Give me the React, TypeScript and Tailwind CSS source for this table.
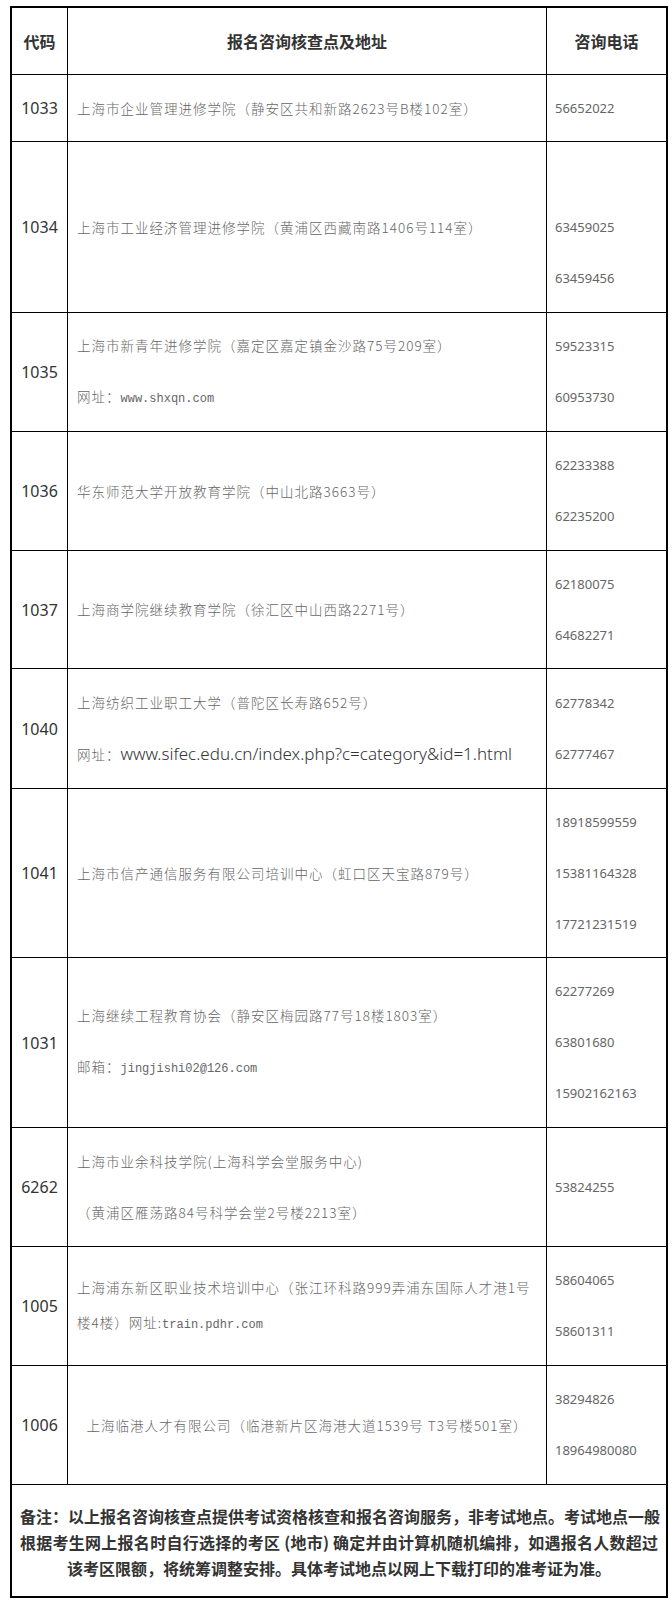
import React from "react";

const cjk = "font-['Noto_Sans_CJK_SC','Noto_Sans_CJK_JP',sans-serif]";
const mono = "font-['Liberation_Mono',monospace] text-[12px] tracking-normal";
const latin = "font-['Noto_Sans',sans-serif] text-[17px] tracking-normal text-[#333]";

type Row = {
  code: string;
  h: string;
  lh?: string;
  center?: boolean;
  lines: React.ReactNode[];
  phones: string[];
};

const rows: Row[] = [
  {
    code: "1033",
    h: "h-[67px]",
    lines: ["上海市企业管理进修学院（静安区共和新路2623号B楼102室）"],
    phones: ["56652022"],
  },
  {
    code: "1034",
    h: "h-[171px]",
    lines: ["上海市工业经济管理进修学院（黄浦区西藏南路1406号114室）"],
    phones: ["", "63459025", "63459456"],
  },
  {
    code: "1035",
    h: "h-[119px]",
    lines: [
      "上海市新青年进修学院（嘉定区嘉定镇金沙路75号209室）",
      <>
        网址：<span className={mono}>www.shxqn.com</span>
      </>,
    ],
    phones: ["59523315", "60953730"],
  },
  {
    code: "1036",
    h: "h-[119px]",
    lines: ["华东师范大学开放教育学院（中山北路3663号）"],
    phones: ["62233388", "62235200"],
  },
  {
    code: "1037",
    h: "h-[118px]",
    lines: ["上海商学院继续教育学院（徐汇区中山西路2271号）"],
    phones: ["62180075", "64682271"],
  },
  {
    code: "1040",
    h: "h-[120px]",
    lines: [
      "上海纺织工业职工大学（普陀区长寿路652号）",
      <>
        网址：<span className={latin}>www.sifec.edu.cn/index.php?c=category&amp;id=1.html</span>
      </>,
    ],
    phones: ["62778342", "62777467"],
  },
  {
    code: "1041",
    h: "h-[169px]",
    lines: ["上海市信产通信服务有限公司培训中心（虹口区天宝路879号）"],
    phones: ["18918599559", "15381164328", "17721231519"],
  },
  {
    code: "1031",
    h: "h-[170px]",
    lines: [
      "上海继续工程教育协会（静安区梅园路77号18楼1803室）",
      <>
        邮箱：<span className={mono}>jingjishi02@126.com</span>
      </>,
    ],
    phones: ["62277269", "63801680", "15902162163"],
  },
  {
    code: "6262",
    h: "h-[119px]",
    lines: ["上海市业余科技学院(上海科学会堂服务中心)", "（黄浦区雁荡路84号科学会堂2号楼2213室）"],
    phones: ["53824255"],
  },
  {
    code: "1005",
    h: "h-[119px]",
    lh: "leading-[35px]",
    lines: [
      "上海浦东新区职业技术培训中心（张江环科路999弄浦东国际人才港1号",
      <>
        楼4楼）网址:<span className={mono}>train.pdhr.com</span>
      </>,
    ],
    phones: ["58604065", "58601311"],
  },
  {
    code: "1006",
    h: "h-[119px]",
    center: true,
    lines: ["上海临港人才有限公司（临港新片区海港大道1539号 T3号楼501室）"],
    phones: ["38294826", "18964980080"],
  },
];

export default function App() {
  return (
    <div className={`bg-white pt-[6px] pl-[10px] pb-[7px] ${cjk}`}>
      <div className="w-[658px] border-2 border-black">
        <div className="flex h-[67px] border-b border-black text-[16px] font-bold text-[#333]">
          <div className="flex w-[56px] items-center justify-center border-r border-black">代码</div>
          <div className="flex w-[479px] items-center justify-center border-r border-black">
            报名咨询核查点及地址
          </div>
          <div className="flex flex-1 items-center justify-center">咨询电话</div>
        </div>

        {rows.map((r) => (
          <div key={r.code} className={`flex border-b border-black ${r.h}`}>
            <div className="flex w-[56px] items-center justify-center border-r border-black font-['Noto_Sans',sans-serif] text-[16px] text-[#333]">
              {r.code}
            </div>
            <div
              className={`flex w-[479px] flex-col justify-center border-r border-black pl-[9px] text-[13.5px] font-light tracking-[1px] text-[#666] ${
                r.lh ?? "leading-[51px]"
              } ${r.center ? "items-center pr-[9px]" : ""}`}
            >
              {r.lines.map((l, i) => (
                <div key={i} className="whitespace-nowrap">
                  {l}
                </div>
              ))}
            </div>
            <div className="flex flex-1 flex-col justify-center pl-2 font-['Noto_Sans',sans-serif] text-[13px] leading-[51px] text-[#666]">
              {r.phones.map((p, i) => (
                <div key={i}>{p || "\u00a0"}</div>
              ))}
            </div>
          </div>
        ))}

        <div className="px-[8px] pt-[18px] pb-[15px] text-[16px] font-bold leading-[26px] text-[#333]">
          <div className="whitespace-nowrap text-justify [text-align-last:justify]">
            备注：以上报名咨询核查点提供考试资格核查和报名咨询服务，非考试地点。考试地点一般
          </div>
          <div className="whitespace-nowrap text-justify [text-align-last:justify]">
            根据考生网上报名时自行选择的考区 (地市) 确定并由计算机随机编排，如遇报名人数超过
          </div>
          <div className="text-center">该考区限额，将统筹调整安排。具体考试地点以网上下载打印的准考证为准。</div>
        </div>
      </div>
    </div>
  );
}
